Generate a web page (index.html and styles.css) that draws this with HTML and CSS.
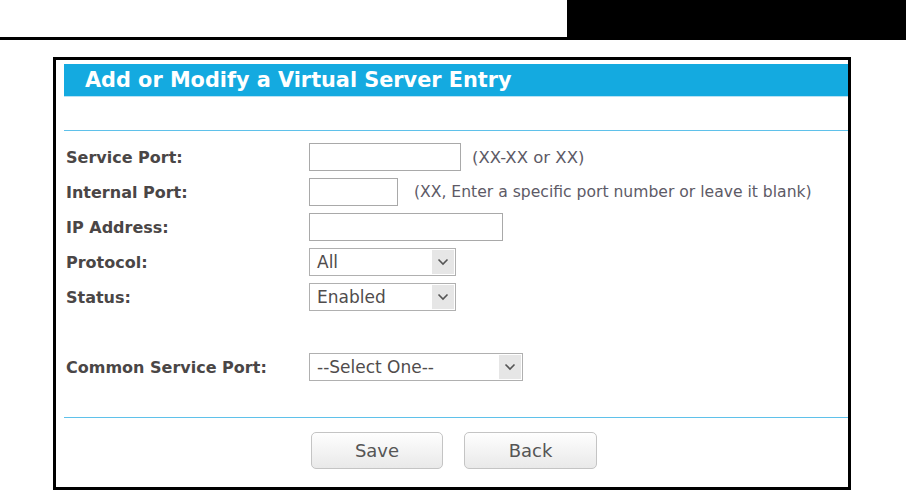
FILE: index.html
```html
<!DOCTYPE html>
<html>
<head>
<meta charset="utf-8">
<link rel="stylesheet" href="styles.css">
</head>
<body>
<div class="topbar"><div class="topbar-left"></div><div class="topbar-right"></div></div>
<div class="panel">
  <div class="panel-title">Add or Modify a Virtual Server Entry</div>
  <div class="rule rule-top"></div>
  <div class="form">
    <div class="label">Service Port:</div>
    <div class="field"><div class="input w152"></div><span class="hint hint-a">(XX-XX or XX)</span></div>
    <div class="label">Internal Port:</div>
    <div class="field"><div class="input w89"></div><span class="hint hint-b">(XX, Enter a specific port number or leave it blank)</span></div>
    <div class="label">IP Address:</div>
    <div class="field"><div class="input w194"></div></div>
    <div class="label">Protocol:</div>
    <div class="field"><div class="select w147"><span class="select-value">All</span><span class="select-arrow"><svg width="12" height="8" viewBox="0 0 12 8"><path d="M1.5 1.5 L6 6 L10.5 1.5" fill="none" stroke="#555" stroke-width="1.6"/></svg></span></div></div>
    <div class="label">Status:</div>
    <div class="field"><div class="select w147"><span class="select-value">Enabled</span><span class="select-arrow"><svg width="12" height="8" viewBox="0 0 12 8"><path d="M1.5 1.5 L6 6 L10.5 1.5" fill="none" stroke="#555" stroke-width="1.6"/></svg></span></div></div>
    <div class="spacer"></div>
    <div class="label">Common Service Port:</div>
    <div class="field"><div class="select w214"><span class="select-value">--Select One--</span><span class="select-arrow"><svg width="12" height="8" viewBox="0 0 12 8"><path d="M1.5 1.5 L6 6 L10.5 1.5" fill="none" stroke="#555" stroke-width="1.6"/></svg></span></div></div>
  </div>
  <div class="rule rule-bottom"></div>
  <div class="buttons">
    <div class="btn">Save</div>
    <div class="btn btn-back">Back</div>
  </div>
</div>
</body>
</html>
```
FILE: styles.css
```css
html, body {
  margin: 0;
  padding: 0;
  background: #fff;
}
body {
  font-family: "DejaVu Sans", "Liberation Sans", sans-serif;
  width: 906px;
  height: 491px;
  overflow: hidden;
}
.topbar {
  display: flex;
  height: 37px;
  border-bottom: 3px solid #000;
}
.topbar-left {
  width: 567px;
}
.topbar-right {
  flex: 1;
  background: #000;
}
.panel {
  margin: 17px 0 0 53px;
  width: 784px;
  height: 423px;
  border: 3px solid #000;
  padding: 4px 0 0 8px;
}
.panel-title {
  height: 32px;
  background: #14aae0;
  border-bottom: 1px solid #b8e2f4;
  color: #fff;
  font-weight: bold;
  font-size: 20.8px;
  line-height: 32px;
  padding-left: 21px;
}
.rule {
  height: 0;
  border-top: 1px solid #5fc1ea;
}
.rule-top {
  margin-top: 33px;
}
.form {
  display: grid;
  grid-template-columns: 245px 1fr;
  row-gap: 7px;
  margin-top: 12px;
  color: #4a4646;
}
.label {
  font-weight: bold;
  font-size: 16px;
  padding-left: 2px;
  display: flex;
  align-items: center;
  height: 28px;
}
.field {
  display: flex;
  align-items: center;
  height: 28px;
}
.spacer {
  grid-column: 1 / 3;
  height: 28px;
}
.input {
  height: 26px;
  border: 1px solid #a9a9a9;
  background: #fff;
  box-sizing: content-box;
}
.w152 { width: 150px; }
.w89 { width: 87px; }
.w194 { width: 192px; }
.w147 { width: 145px; }
.w214 { width: 212px; }
.hint {
  color: #5d5a66;
  font-size: 16px;
}
.hint-a {
  margin-left: 11px;
  font-size: 16.5px;
}
.hint-b {
  margin-left: 16px;
  font-size: 15.6px;
}
.select {
  height: 26px;
  border: 1px solid #b0b0b0;
  display: flex;
  align-items: stretch;
  background: #fff;
}
.select-value {
  flex: 1;
  font-size: 17px;
  padding-left: 7px;
  line-height: 26px;
  color: #504c4c;
}
.select-arrow {
  width: 22px;
  margin: 1px 1px 1px 0;
  background: #e6e6e6;
  display: flex;
  align-items: center;
  justify-content: center;
}
.rule-bottom {
  margin-top: 36px;
}
.buttons {
  display: flex;
  gap: 21px;
  padding-left: 247px;
  margin-top: 14px;
}
.btn {
  width: 130px;
  height: 35px;
  border: 1px solid #c4c4c4;
  border-radius: 5px;
  background: linear-gradient(#fefefe, #e9e9e9);
  color: #555;
  font-size: 18px;
  display: flex;
  align-items: center;
  justify-content: center;
}
.btn-back {
  width: 131px;
}
```
